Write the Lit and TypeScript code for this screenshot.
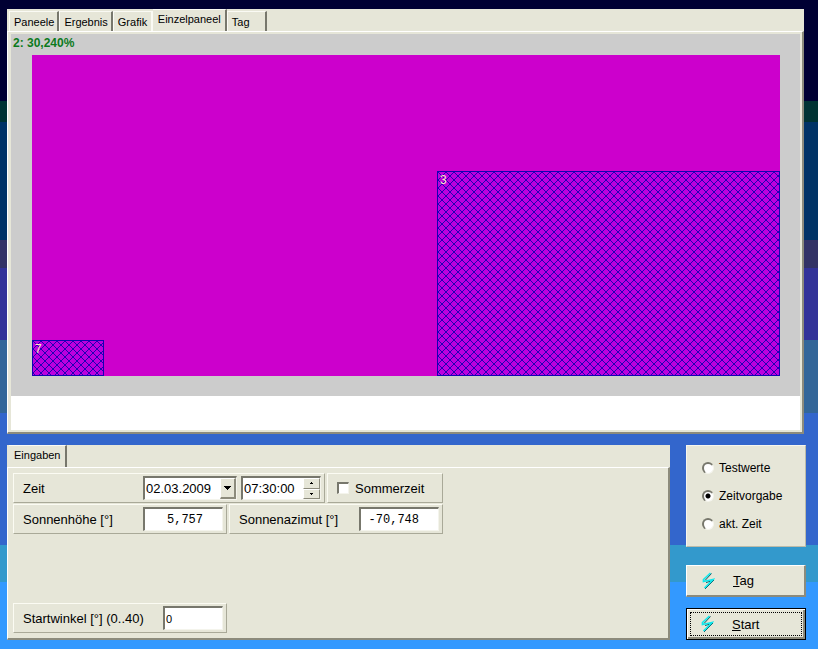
import { LitElement, html, css, svg } from "lit";
import { customElement, property, state } from "lit/decorators.js";
import { classMap } from "lit/directives/class-map.js";
import { styleMap } from "lit/directives/style-map.js";

const controls = css`
  * {
    box-sizing: border-box;
  }
  button,
  input {
    font: inherit;
    color: inherit;
    margin: 0;
    border-radius: 0;
    outline: none;
  }
`;

interface Shadow {
  id: string;
  left: number;
  top: number;
  width: number;
  height: number;
}

/** Panel surface with the shadows cast by neighbouring panels. */
@customElement("panel-plot")
export class PanelPlot extends LitElement {
  @property({ attribute: false }) shadows: Shadow[] = [];

  static styles = css`
    :host {
      display: block;
      position: relative;
      background: #cc00cc;
    }
    .shadow {
      position: absolute;
      box-sizing: border-box;
      border: 1px solid #1400b4;
      background: #bc00de;
      color: #ffe6c0;
      font-size: 12px;
      line-height: 16px;
    }
    .hatch {
      position: absolute;
      inset: 0;
      width: 100%;
      height: 100%;
    }
    .name {
      position: relative;
      padding-left: 2px;
    }
  `;

  render() {
    return this.shadows.map(
      (s) => html`<div
        class="shadow"
        style=${styleMap({
          left: `${s.left}%`,
          top: `${s.top}%`,
          width: `${s.width}%`,
          height: `${s.height}%`,
        })}
      >
        <svg class="hatch" aria-hidden="true">
          <defs>
            ${svg`<pattern id=${"hatch" + s.id} width="8" height="8" patternUnits="userSpaceOnUse">
              <path
                d="M0 0h1v1h1v1h1v1h1v1h1v1h1v1h1v1h1v1h-1v-1h-1v-1h-1v-1h-1v-1h-1v-1h-1v-1h-1v-1h-1z
                   M8 1h-1v1h-1v1h-1v1h-1v1h-1v1h-1v1h-1v1h-1v-1h1v-1h1v-1h1v-1h1v-1h1v-1h1v-1h1v-1h1z"
                fill="#2400b4"
                shape-rendering="crispEdges"
              />
            </pattern>`}
          </defs>
          <rect width="100%" height="100%" fill=${`url(#hatch${s.id})`}></rect>
        </svg>
        <span class="name">${s.id}</span>
      </div>`
    );
  }
}

/** Row of page tabs in the classic raised style. */
@customElement("tab-strip")
export class TabStrip extends LitElement {
  @property({ attribute: false }) tabs: string[] = [];
  @property() active = "";

  static styles = [
    controls,
    css`
      :host {
        display: flex;
        align-items: flex-end;
        height: 22px;
        padding-left: 2px;
        font-size: 11px;
        background: #e6e6d8;
      }
      .tab {
        height: 20px;
        min-width: 40px;
        padding: 0 3px 0 4px;
        text-align: left;
        background: #e6e6d8;
        border: solid #fafaf4;
        border-width: 1px 2px 0 1px;
        border-right-color: #77776c;
      }
      .active {
        height: 22px;
        padding: 0 4px 4px 5px;
        border-left-width: 0;
      }
      .before {
        border-right-color: #fafaf4;
      }
    `,
  ];

  render() {
    const at = this.tabs.indexOf(this.active);
    return this.tabs.map(
      (t, i) => html`<button
        type="button"
        class=${classMap({ tab: true, active: i === at, before: i === at - 1 })}
        @click=${() => this.dispatchEvent(new CustomEvent("pick", { detail: t }))}
      >${t}</button>`
    );
  }
}

@customElement("app-root")
export class AppRoot extends LitElement {
  @state() private tab = "Einzelpaneel";
  @state() private mode = "Zeitvorgabe";

  private shadows: Shadow[] = [
    { id: "3", left: 54.14, top: 36.14, width: 45.86, height: 63.86 },
    { id: "7", left: 0, top: 88.79, width: 9.63, height: 11.21 },
  ];

  static styles = [
    controls,
    css`
      :host {
        box-sizing: border-box;
        display: flex;
        flex-direction: column;
        gap: 11px;
        min-height: 100vh;
        padding: 9px 12px 9px 7px;
        font-family: "Liberation Sans", Arial, sans-serif;
        font-size: 13px;
        color: #000;
        background: linear-gradient(
          #000033 101px,
          #003333 101px 122px,
          #003366 122px 240px,
          #333366 240px 268px,
          #333399 268px 340px,
          #336699 340px 413px,
          #3366cc 413px 545px,
          #3399cc 545px 582px,
          #3399ff 582px
        );
      }
      .sheet {
        display: flex;
        flex-direction: column;
      }
      .view {
        flex: 1;
        margin-right: 2px;
      }
      .page {
        flex: 1;
        display: flex;
        flex-direction: column;
        background: #e6e6d8;
        border: solid #fff;
        border-width: 1px 2px 2px 1px;
        border-right-color: #8c8b7c;
        border-bottom-color: #8c8b7c;
      }
      .canvas {
        padding: 2px 2px 2px 3px;
      }
      .chart {
        flex: 1;
        display: flex;
        flex-direction: column;
        padding: 0 20px 20px 21px;
        background: #cccccc;
      }
      .caption {
        margin: 0 0 0 -19px;
        font-size: 12px;
        line-height: 18px;
        padding-bottom: 3px;
        font-weight: bold;
        color: #0c7a1c;
      }
      .plot {
        flex: 1;
        min-height: 200px;
      }
      .log {
        height: 34px;
        background: #fff;
      }
      .lower {
        display: grid;
        grid-template-columns: minmax(0, 1fr) 120px;
        gap: 16px;
      }
      .form {
        gap: 1px;
        padding: 5px;
      }
      .row {
        display: flex;
        gap: 2px;
      }
      .last {
        margin-top: auto;
      }
      .box {
        display: flex;
        align-items: center;
        gap: 4px;
        height: 30px;
        padding: 0 3px 0 9px;
        border: 1px solid #fbfbf3;
        border-right-color: #a9a998;
        border-bottom-color: #a9a998;
      }
      .half {
        width: 214px;
      }
      .time {
        width: 312px;
      }
      .summer {
        width: 116px;
      }
      .label {
        flex: 1;
        white-space: nowrap;
      }
      .field {
        display: flex;
        height: 24px;
        background: #fff;
        border: solid #77776c;
        border-width: 2px 1px 1px 2px;
        border-right-color: #f4f4ec;
        border-bottom-color: #f4f4ec;
      }
      .entry {
        flex: 1;
        width: 100%;
        min-width: 0;
        padding: 0 0 0 1px;
        border: 0;
        background: transparent;
      }
      .date {
        width: 94px;
      }
      .clock,
      .number {
        width: 80px;
      }
      .angle {
        width: 60px;
      }
      .angle .entry {
        font-size: 11px;
      }
      .number .entry {
        font-family: "Liberation Mono", "Courier New", monospace;
        font-size: 12px;
        text-align: right;
        padding-right: 19px;
      }
      .raised {
        display: flex;
        align-items: center;
        justify-content: center;
        padding: 0;
        background: #e6e6d8;
        border: solid #fff;
        border-width: 1px 2px 2px 1px;
        border-right-color: #8c8b7c;
        border-bottom-color: #8c8b7c;
      }
      .drop {
        width: 16px;
      }
      .spin {
        display: flex;
        flex-direction: column;
        width: 17px;
      }
      .step {
        flex: 1;
        min-height: 0;
        border-width: 1px;
      }
      .tick,
      .dot {
        appearance: none;
        flex: none;
        width: 12px;
        height: 12px;
        background: #fff;
        border: solid #77776c;
        border-width: 2px 1px 1px 2px;
        border-right-color: #f4f4ec;
        border-bottom-color: #f4f4ec;
      }
      .tick:checked {
        background: radial-gradient(#000 3px, #fff 3px);
      }
      .dot {
        border-radius: 50%;
      }
      .dot:checked {
        background: radial-gradient(circle at 4px 4px, #000 2px, #fff 3px);
      }
      .check {
        display: flex;
        align-items: center;
        gap: 6px;
      }
      .side {
        display: flex;
        flex-direction: column;
      }
      .modes {
        margin: 0 0 18px;
        padding: 8px 0 8px 15px;
        background: #e6e6d8;
        border: 1px solid #f6f6ee;
        border-right-color: #bcbba8;
        border-bottom-color: #bcbba8;
      }
      .mode {
        display: flex;
        align-items: center;
        gap: 5px;
        height: 28px;
        font-size: 12px;
      }
      .action {
        justify-content: flex-start;
        gap: 18px;
        height: 32px;
        padding-left: 14px;
      }
      .default {
        margin-top: 11px;
        padding-left: 13px;
        border: 1px solid #000;
        box-shadow: inset 1px 1px #fff, inset -2px -2px #8c8b7c;
        position: relative;
      }
      .default::after {
        content: "";
        position: absolute;
        inset: 3px;
        border: 1px dotted #000;
      }
    `,
  ];

  private arrow(d: string, w: number, h: number) {
    return html`<svg width=${w} height=${h} viewBox="0 0 ${w} ${h}" shape-rendering="crispEdges" aria-hidden="true">
      <path d=${d}></path>
    </svg>`;
  }

  private bolt() {
    return html`<svg width="14" height="18" viewBox="0 0 14 18" fill="none" aria-hidden="true">
      <path d="M10.5 1.5L4 8.5M5 10.5L12 8.5M13 8L4 17" stroke="#14505c" stroke-width="1"></path>
      <path d="M9.5 1L2.5 7.5V9.5L12 7.5L3.5 16" stroke="#10e8ec" stroke-width="1.7"></path>
    </svg>`;
  }

  private action(text: string, isDefault = false) {
    return html`<button type="button" class=${classMap({ raised: true, action: true, default: isDefault })}>
      ${this.bolt()}<span><u>${text[0]}</u>${text.slice(1)}</span>
    </button>`;
  }

  private modeRow(text: string) {
    return html`<label class="mode"
      ><input
        class="dot"
        type="radio"
        name="mode"
        .checked=${this.mode === text}
        @change=${() => (this.mode = text)}
      />${text}</label
    >`;
  }

  private valueBox(id: string, label: string, value: string, kind: string) {
    return html`<div class="box half">
      <label class="label" for=${id}>${label}</label>
      <span class="field ${kind}"><input class="entry" id=${id} type="text" .value=${value} /></span>
    </div>`;
  }

  render() {
    return html`
      <section class="sheet view">
        <tab-strip
          .tabs=${["Paneele", "Ergebnis", "Grafik", "Einzelpaneel", "Tag"]}
          .active=${this.tab}
          @pick=${(e: CustomEvent<string>) => (this.tab = e.detail)}
        ></tab-strip>
        <div class="page canvas">
          <div class="chart">
            <p class="caption">2: 30,240%</p>
            <panel-plot class="plot" .shadows=${this.shadows}></panel-plot>
          </div>
          <div class="log"></div>
        </div>
      </section>
      <div class="lower">
        <section class="sheet">
          <tab-strip .tabs=${["Eingaben"]} active="Eingaben"></tab-strip>
          <div class="page form">
            <div class="row">
              <div class="box time">
                <label class="label" for="date">Zeit</label>
                <span class="field date">
                  <input class="entry" id="date" type="text" value="02.03.2009" />
                  <button type="button" class="raised drop" aria-label="Kalender">
                    ${this.arrow("M0 0H7V1H6V2H5V3H4V4H3V3H2V2H1V1H0Z", 7, 4)}
                  </button>
                </span>
                <span class="field clock">
                  <input class="entry" type="text" aria-label="Uhrzeit" value="07:30:00" />
                  <span class="spin">
                    <button type="button" class="raised step" aria-label="später">
                      ${this.arrow("M1 0H2V1H3V2H0V1H1Z", 3, 2)}
                    </button>
                    <button type="button" class="raised step" aria-label="früher">
                      ${this.arrow("M0 0H3V1H2V2H1V1H0Z", 3, 2)}
                    </button>
                  </span>
                </span>
              </div>
              <div class="box summer">
                <label class="check"><input class="tick" type="checkbox" />Sommerzeit</label>
              </div>
            </div>
            <div class="row">
              ${this.valueBox("height", "Sonnenhöhe [°]", "5,757", "number")}
              ${this.valueBox("azimuth", "Sonnenazimut [°]", "-70,748", "number")}
            </div>
            <div class="row last">
              ${this.valueBox("angle", "Startwinkel [°] (0..40)", "0", "angle")}
            </div>
          </div>
        </section>
        <div class="side">
          <div class="modes" role="radiogroup" aria-label="Modus">
            ${["Testwerte", "Zeitvorgabe", "akt. Zeit"].map((m) => this.modeRow(m))}
          </div>
          ${this.action("Tag")} ${this.action("Start", true)}
        </div>
      </div>
    `;
  }
}
